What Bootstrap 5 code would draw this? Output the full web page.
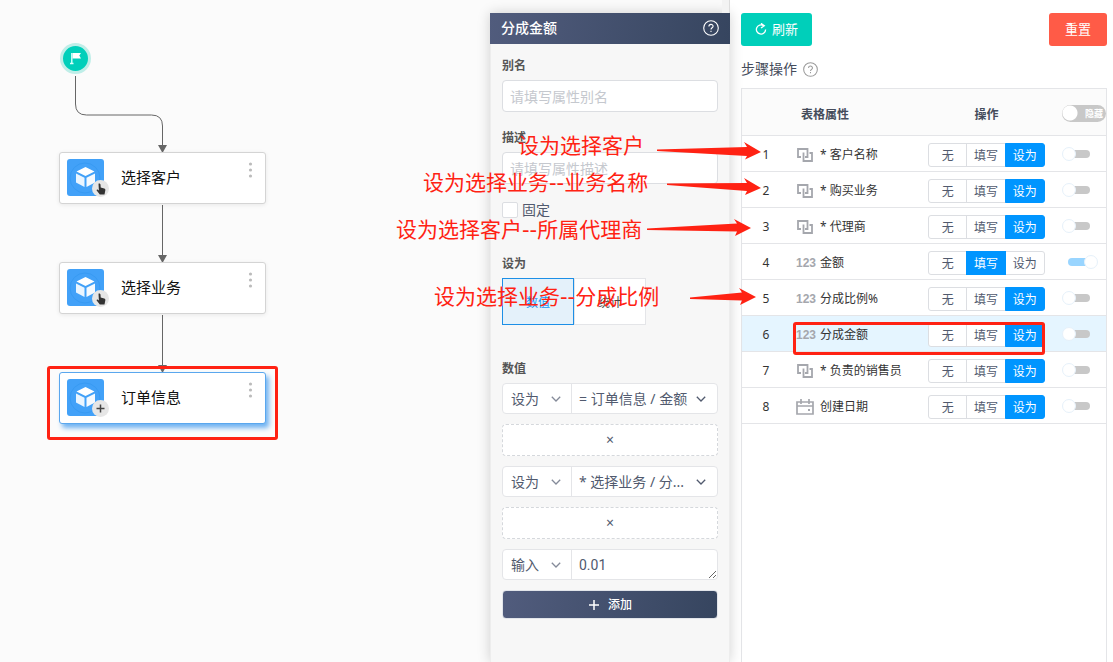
<!DOCTYPE html>
<html lang="zh-CN">
<head>
<meta charset="utf-8">
<meta name="viewport" content="width=device-width, initial-scale=1">
<title>分成金额</title>
<link href="https://cdn.jsdelivr.net/npm/bootstrap@5.3.0/dist/css/bootstrap.min.css" rel="stylesheet">
<style>
:root{--line:#e4e5e8;--ink:#515a6e;--blue:#0095ff;--red:#ff2213}
body{font-family:"Noto Sans","Noto Sans CJK SC",sans-serif;font-size:14px;line-height:20px;color:#333;background:#fff}
.canvas{background:#fbfbfb;min-width:300px}
.edges{left:0;top:0;pointer-events:none}
.start{left:60px;top:43px;width:31px;height:31px;border:3px solid #bfeee8;background:#00cfba}
.flow-node{left:59px;width:207px;height:52px;border:1px solid #d4d4d4;border-radius:3px;background:#fff;color:#111;font-size:15px;line-height:18px;padding:0 12px 0 7px;box-shadow:0 1px 4px rgba(0,0,0,.08)}
.flow-node span{padding-left:12px;padding-bottom:2px}
.n1{top:152px}.n2{top:262px}.n3{top:372px;border-color:#5aa7ee;box-shadow:3px 4px 5px #6eb2f2}
.more{margin-bottom:16px;padding:0;border:0;background:none;line-height:0}
.mark-box{border:3px solid var(--red);border-radius:3px;pointer-events:none}
.mark-node{left:47px;top:366px;width:231px;height:74px}
.mark-row{left:3px;top:6px;width:252px;height:33px;z-index:2}
.side{width:240px;z-index:3;padding-top:13px;background:#fbfbfb}
.side::before{content:"";position:absolute;right:0;top:0;width:8px;height:13px;background:#f3f3f3;border-right:1px solid #ddd}
.side-in{background:#f7f7f7;border:solid #ededed;border-width:0 1px;box-shadow:0 0 12px rgba(0,0,0,.18)}
.side-head{height:31px;margin:0 -1px;padding:0 11px 2px;color:#fff;font-weight:500}
.grad{background:linear-gradient(100deg,#515c7d,#36455f)}
.side-body{padding:12px 11px}
.cap{font-size:12px;line-height:20px;font-weight:600;color:#555;margin:0 0 4px;display:block}
.d-flex+.cap{margin-top:34px}
.form-control.fld{height:32px;padding:0 7px;font-size:14px;border-color:#dcdee2;border-radius:4px;color:var(--ink)}
.fld::placeholder{color:#c5c8ce}
.form-check-input.sq{width:16px;height:16px;margin:0;border-color:#dcdee2;border-radius:2px}
.fix-label{color:var(--ink)}
.tab-btn{width:72px;height:47px;border:1px solid var(--line);border-radius:0;background:#fff;font-size:12px;padding:0;line-height:47px;color:#444}
.btn-check:checked+.tab-btn{background:#e4f1fa;border-color:#1d8fe6;color:#1698f5}
.stack{gap:10px}
.pair{height:31px;border:1px solid var(--line);border-radius:4px;background:#fff;overflow:hidden}
.pair select,.pair textarea{appearance:none;border:0;background:transparent;color:var(--ink);font-size:14px;line-height:20px;padding:0 8px;outline:0}
.pair .mode{width:69px;border-right:1px solid var(--line)}
.pair .wide{padding:0 7px}
.pair textarea{padding:5px 7px 3px;min-width:0;font-family:Roboto,sans-serif;resize:both}
.pair .arrow{right:11px;top:12px;pointer-events:none}
.pair .arrow.soft{opacity:.7}
.dash{height:32px;border:1px dashed #d5d8dc;border-radius:4px;background:#fff;color:var(--ink)}
.btn.add{height:29px;padding:0;border:1px solid #e2e5ea;border-radius:4px;color:#fff;font-size:12px;font-weight:500}
.notes{left:-100px;top:0;width:375px;height:330px;pointer-events:none;overflow:visible}
.notes text{font-size:21px;fill:var(--red);font-family:"DejaVu Sans","Noto Sans CJK SC",sans-serif}
.notes path{fill:var(--red)}
.pane{width:383px;padding:13px 6px 0 11px}
.btn.top-btn{height:33px;border:0;border-radius:3px;color:#fff;font-size:13px;line-height:33px;padding:0}
.go{width:71px;background:#00cfba!important}.reset{width:58px;background:#ff5b47!important}
.title-row{margin:13px 0 9px;color:#454c5b;gap:6px}
.sheet{border:1px solid var(--line);border-bottom:0}
.steps{table-layout:fixed;width:100%;font-size:12px;line-height:18px;border-collapse:separate;border-spacing:0}
.steps th,.steps td{padding:2px 0 0;border-bottom:1px solid var(--line);height:36px}
.steps th{height:47px;padding-top:6px;background:#fbfbfb;font-weight:600;color:#454c5b}
.steps tr.on td{background:#e5f5ff}
.c-no{width:48px}.c-op{width:117px}.c-sw{width:61px}
.steps th.name{padding-left:11px}.steps td.name{padding-left:6px}
.steps .sw{padding-left:17px;padding-top:2px}.steps td.sw{padding-top:0}
.ico{width:24px}
.ico .inset{margin-left:1px}
.digits{font:700 12px/18px "Liberation Sans",sans-serif;color:#a5a7ad}
.opt{height:24px;width:39px;padding:0;font-size:12px;line-height:24px;border:1px solid #dcdee2;border-radius:3px;color:var(--ink);background:#fff}
.opt:last-child{width:40px}
.btn-check:checked+.opt{background:var(--blue);border-color:var(--blue);color:#fff}
.tog{appearance:none;display:block;position:relative;width:36px;height:14px;margin:0}
.tog::before{content:"";position:absolute;left:6px;right:8px;top:3px;height:8px;border-radius:4px;background:#c8c8c8}
.tog::after{content:"";position:absolute;left:0;top:0;width:14px;height:14px;border-radius:50%;background:#fff;border:1px solid #e6f1fa}
.tog:checked::before{background:#99d5ff}.tog:checked::after{left:22px}
.tog-all{appearance:none;display:block;width:44px;height:17px;margin:0;border-radius:9px;background:radial-gradient(circle at 8px 8px,#fff 7px,#c8c8c8 8px)}
.tog-tip{right:3px;top:0;font-size:9px;line-height:17px;color:#fff;pointer-events:none}
</style>
</head>
<body>
<svg width="0" height="0" class="position-absolute" aria-hidden="true">
<defs>
<symbol id="cube" viewBox="0 0 42 40"><rect y="1" width="37" height="37" rx="3" fill="#42a1f8"/><circle cx="18" cy="20" r="15" fill="none" stroke="#379af3"/><path d="M18.500 9l9 4.500-9 4.500-9-4.500z" fill="#fff"/><path d="M9 15.500l8.500 4.200v9.300L9 24.500z" fill="#eaf5ff"/><path d="M28 15.500l-8.500 4.200v9.300l8.500-4.500z" fill="#f5faff"/><circle cx="33.500" cy="30.500" r="8.500" fill="#e6e6e6"/></symbol>
<symbol id="hand" viewBox="0 0 10 12"><path d="M2.500.8c1-.9 1.900 0 2 .8l.2 3 3.500.9c1 .3 1.300 1 1.100 2L8.500 11.500H3.800L.7 7.600c-.5-.8.5-1.400 1.200-.9l1 .8z" fill="#333"/></symbol>
<symbol id="dots" viewBox="0 0 4 16"><g fill="#bbb"><circle cx="2" cy="2" r="1.600"/><circle cx="2" cy="8" r="1.600"/><circle cx="2" cy="14" r="1.600"/></g></symbol>
<symbol id="chev" viewBox="0 0 10 6"><path d="M.8.800l4.200 4.200L9.200.8" fill="none" stroke="#515a6e" stroke-width="1.300"/></symbol>
<symbol id="ask" viewBox="0 0 16 16"><circle cx="8" cy="8" r="7.300" fill="none" stroke="currentColor" stroke-width="1.100"/><path d="M5.900 6.400c0-2.700 4.200-2.700 4.200-.1 0 1.400-2.100 1.600-2.100 3.200M8 10.700v1.300" fill="none" stroke="currentColor" stroke-width="1.100"/></symbol>
<symbol id="link" viewBox="0 0 16 14"><path d="M4 9H1V1h9.500v8H8M6.500 4.500V13H15V5h-2.500" fill="none" stroke="#a5a7ad" stroke-width="1.800"/></symbol>
<symbol id="cal" viewBox="0 0 18 16"><path d="M1 3h16v12H1zM1 7h16M5 0v5M13 0v5" fill="none" stroke="#a5a7ad" stroke-width="1.700"/><path d="M12 10h2v2h-2z" fill="#a5a7ad"/></symbol>
</defs>
</svg>
<div class="d-flex vh-100 overflow-hidden">
<main class="canvas flex-fill position-relative">
<svg class="edges position-absolute" width="300" height="450" fill="none" stroke="#666"><path d="M75.500 76v28q0 11 11 11h65q11 0 11 11v22M162.500 205v53M162.500 315v53"/><g fill="#666" stroke="none"><path d="M158 145h9l-4.500 8zM158 255h9l-4.500 8zM158 365h9l-4.500 8z"/></g></svg>
<div class="start position-absolute rounded-circle d-flex align-items-center justify-content-center"><svg width="12" height="13" viewBox="0 0 12 13"><path d="M1.800 1v10M0 11.500h3.500" stroke="#d8fffb" stroke-width="1.400"/><path d="M2.500 1h8.500L9.300 3.600 11 6.500H2.500z" fill="#fff"/></svg></div>
<div class="flow-node n1 position-absolute d-flex align-items-center"><svg width="42" height="40"><use href="#cube"/><use href="#hand" x="29" y="25" width="10" height="12"/></svg><span class="flex-fill">选择客户</span><button class="more" aria-label="更多"><svg width="5" height="16"><use href="#dots"/></svg></button></div>
<div class="flow-node n2 position-absolute d-flex align-items-center"><svg width="42" height="40"><use href="#cube"/><use href="#hand" x="29" y="25" width="10" height="12"/></svg><span class="flex-fill">选择业务</span><button class="more" aria-label="更多"><svg width="5" height="16"><use href="#dots"/></svg></button></div>
<div class="flow-node n3 position-absolute d-flex align-items-center"><svg width="42" height="40"><use href="#cube"/><path d="M29.500 30.500h8M33.500 26.500v8" stroke="#444" stroke-width="1.500"/></svg><span class="flex-fill">订单信息</span><button class="more" aria-label="更多"><svg width="5" height="16"><use href="#dots"/></svg></button></div>
<div class="mark-box mark-node position-absolute"></div>
</main>
<aside class="side position-relative flex-shrink-0 d-flex flex-column">
<div class="side-in flex-fill">
<header class="side-head grad d-flex align-items-center justify-content-between"><span>分成金额</span><svg width="16" height="16"><use href="#ask"/></svg></header>
<form class="side-body" onsubmit="return false">
<label class="cap" for="alias">别名</label>
<input id="alias" class="form-control fld mb-3" placeholder="请填写属性别名">
<label class="cap" for="desc">描述</label>
<input id="desc" class="form-control fld mb-3" placeholder="请填写属性描述">
<div class="d-flex align-items-center gap-1"><input type="checkbox" class="form-check-input sq" id="fix"><label class="fix-label" for="fix">固定</label></div>
<span class="cap">设为</span>
<div class="d-flex"><input type="radio" class="btn-check" name="kind" id="k1" checked><label class="btn tab-btn" for="k1">数值</label><input type="radio" class="btn-check" name="kind" id="k2"><label class="btn tab-btn" for="k2">统计</label></div>
<span class="cap">数值</span>
<div class="d-grid stack">
<div class="pair d-flex"><div class="position-relative d-flex"><select class="mode" aria-label="方式一"><option>设为</option></select><svg class="arrow soft position-absolute" width="10" height="6"><use href="#chev"/></svg></div><div class="position-relative d-flex flex-fill"><select class="wide flex-fill" aria-label="值一"><option>= 订单信息 / 金额</option></select><svg class="arrow position-absolute" width="10" height="6"><use href="#chev"/></svg></div></div>
<div class="dash d-flex align-items-center justify-content-center">×</div>
<div class="pair d-flex"><div class="position-relative d-flex"><select class="mode" aria-label="方式二"><option>设为</option></select><svg class="arrow soft position-absolute" width="10" height="6"><use href="#chev"/></svg></div><div class="position-relative d-flex flex-fill"><select class="wide flex-fill" aria-label="值二"><option>* 选择业务 / 分...</option></select><svg class="arrow position-absolute" width="10" height="6"><use href="#chev"/></svg></div></div>
<div class="dash d-flex align-items-center justify-content-center">×</div>
<div class="pair d-flex"><div class="position-relative d-flex"><select class="mode" aria-label="方式三"><option>输入</option></select><svg class="arrow soft position-absolute" width="10" height="6"><use href="#chev"/></svg></div><textarea class="flex-fill" rows="1" aria-label="值三">0.01</textarea></div>
<button class="btn add grad d-flex align-items-center justify-content-center gap-2" type="button"><svg width="12" height="12"><path d="M1 6h10M6 1v10" stroke="#fff" stroke-width="1.500"/></svg>添加</button>
</div>
</form>
</div>
<svg class="notes position-absolute">
<text x="128" y="153">设为选择客户</text><text x="33" y="190">设为选择业务--业务名称</text><text x="6" y="237">设为选择客户--所属代理商</text><text x="44" y="304">设为选择业务--分成比例</text>
<path d="M267 149.500L357 147l-3-5 17 10-16 7.500 2-3.500L267 151z"/><path d="M277 183.500L357 183l-3-5 17 10-16 7 2-4L277 185z"/><path d="M257 228.500L347 223.500l-3-4.500 17 9-16 8 2-4.500L257 230z"/><path d="M300 297.500L352 292.500l-3-4.500 17 9-16 8 2-4.500L300 299z"/>
</svg>
</aside>
<section class="pane flex-shrink-0 d-flex flex-column">
<div class="d-flex justify-content-between"><button class="btn top-btn go d-flex align-items-center justify-content-center"><svg class="me-1" width="13" height="13" viewBox="0 0 13 13"><path d="M8.500 2.600A4.600 4.600 0 1 0 10.600 6.500M6 .3l3.300 2.400-3.300 2.300" fill="none" stroke="#fff" stroke-width="1.300"/></svg>刷新</button><button class="btn top-btn reset">重置</button></div>
<div class="d-flex align-items-center title-row">步骤操作<svg width="15" height="15" viewBox="0 0 16 16" color="#9a9a9a"><use href="#ask"/></svg></div>
<div class="sheet flex-fill">
<table class="steps"><colgroup><col class="c-no"><col><col class="c-op"><col class="c-sw"></colgroup>
<thead><tr><th></th><th class="name">表格属性</th><th class="text-center">操作</th><th class="sw"><div class="position-relative"><input type="checkbox" class="tog-all" id="hideall"><label class="tog-tip position-absolute" for="hideall">隐藏</label></div></th></tr></thead>
<tbody id="rows"></tbody></table>
</div>
</section>
</div>
<script src="https://cdn.jsdelivr.net/npm/bootstrap@5.3.0/dist/js/bootstrap.bundle.min.js"></script>
<script>
const rows=[["link","* 客户名称",2],["link","* 购买业务",2],["link","* 代理商",2],["num","金额",1],["num","分成比例%",2],["num","分成金额",2],["link","* 负责的销售员",2],["cal","创建日期",2]];
const icons={
link:'<svg width="16" height="14" class="inset"><use href="#link"/></svg>',
cal:'<svg width="18" height="16"><use href="#cal"/></svg>',
num:'<b class="digits">123</b>'};
document.getElementById("rows").innerHTML=rows.map(([ic,t,v],i)=>`<tr class="${i==5?"on":""}"><td class="text-center">${i+1}</td><td class="name position-relative"><div class="d-flex align-items-center"><span class="ico d-flex align-items-center">${icons[ic]}</span>${t}</div>${i==5?'<div class="mark-box mark-row position-absolute"></div>':""}</td><td><div class="btn-group d-flex">${["无","填写","设为"].map((o,j)=>`<input type="radio" class="btn-check" name="r${i}" id="r${i}${j}" ${v==j?"checked":""}><label class="btn opt" for="r${i}${j}">${o}</label>`).join("")}</div></td><td class="sw"><input type="checkbox" class="tog" aria-label="隐藏 ${t}" ${i==3?"checked":""}></td></tr>`).join("");
</script>
</body>
</html>
